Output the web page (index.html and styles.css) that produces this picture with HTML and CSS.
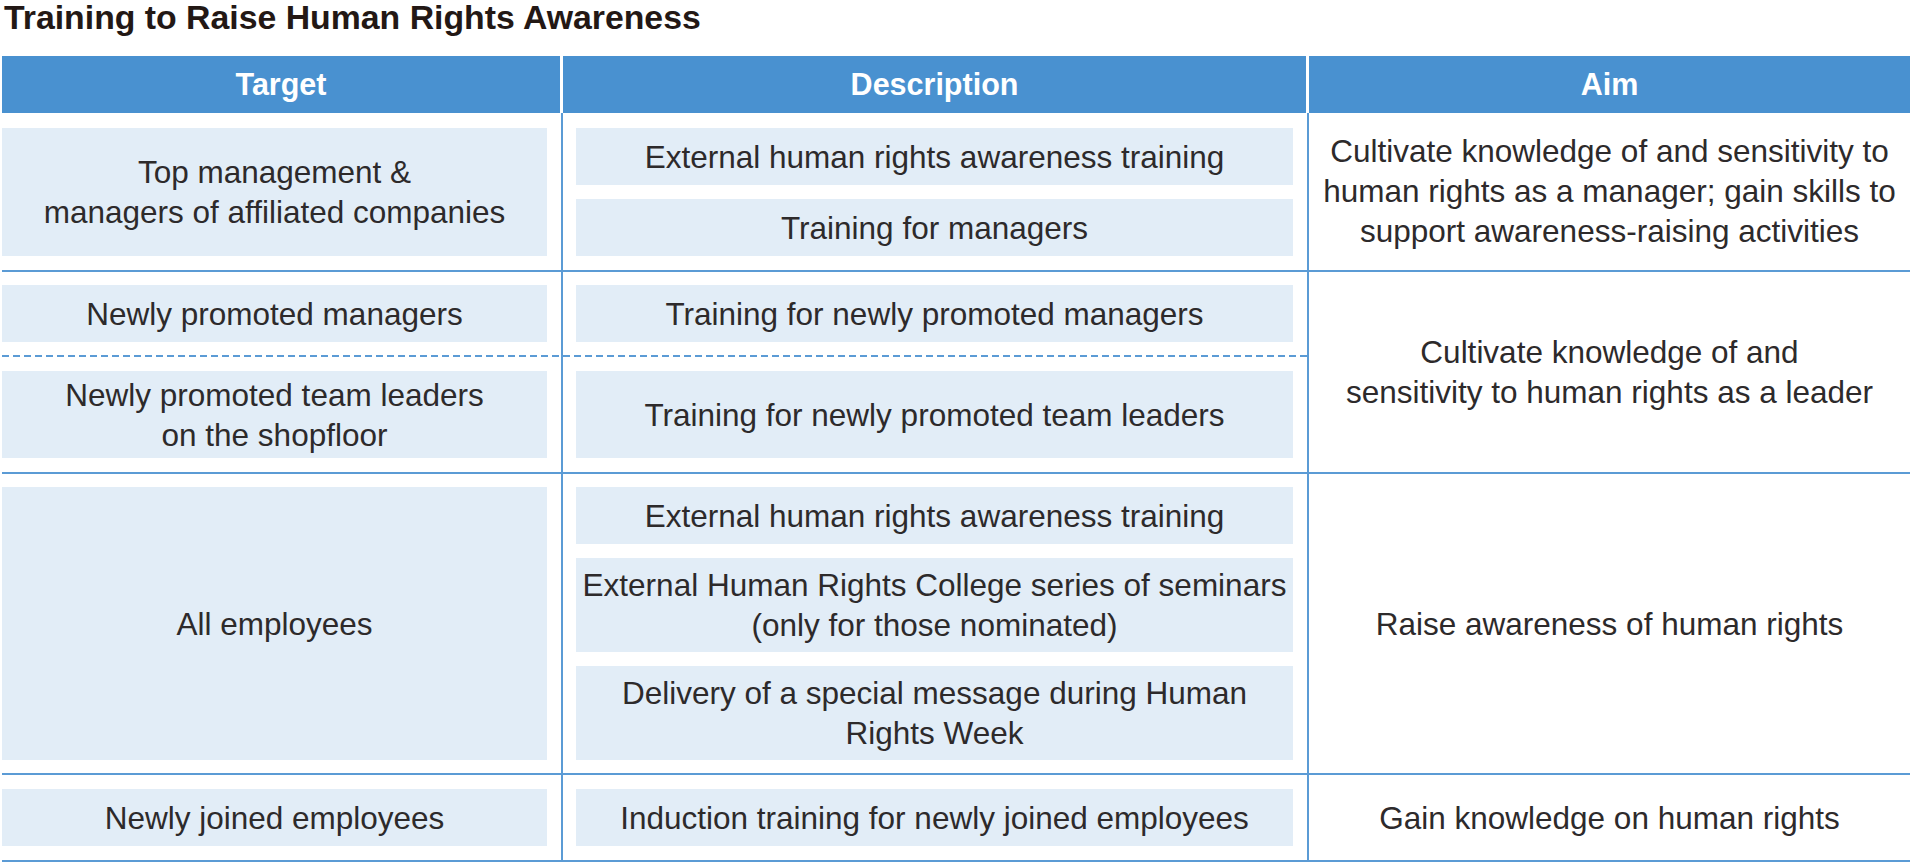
FILE: index.html
```html
<!DOCTYPE html>
<html lang="en">
<head>
<meta charset="utf-8">
<title>Training to Raise Human Rights Awareness</title>
<link rel="stylesheet" href="styles.css">
</head>
<body>
<div class="page">
  <h1 class="title">Training to Raise Human Rights Awareness</h1>
  <div class="table">
    <div class="head">
      <div class="hcell">Target</div>
      <div class="hcell">Description</div>
      <div class="hcell">Aim</div>
    </div>

    <div class="grp grp-1">
      <div class="cell c-target"><div class="box">Top management &amp;<br>managers of affiliated companies</div></div>
      <div class="cell c-desc">
        <div class="box">External human rights awareness training</div>
        <div class="box">Training for managers</div>
      </div>
      <div class="cell c-aim">Cultivate knowledge of and sensitivity to<br>human rights as a manager; gain skills to<br>support awareness-raising activities</div>
    </div>

    <div class="grp grp-2">
      <div class="cell c-target dashed top"><div class="box">Newly promoted managers</div></div>
      <div class="cell c-desc dashed top"><div class="box">Training for newly promoted managers</div></div>
      <div class="cell c-aim span2">Cultivate knowledge of and<br>sensitivity to human rights as a leader</div>
      <div class="cell c-target"><div class="box">Newly promoted team leaders<br>on the shopfloor</div></div>
      <div class="cell c-desc"><div class="box">Training for newly promoted team leaders</div></div>
    </div>

    <div class="grp grp-3">
      <div class="cell c-target top"><div class="box">All employees</div></div>
      <div class="cell c-desc top">
        <div class="box">External human rights awareness training</div>
        <div class="box tall">External Human Rights College series of seminars<br>(only for those nominated)</div>
        <div class="box tall">Delivery of a special message during Human<br>Rights Week</div>
      </div>
      <div class="cell c-aim">Raise awareness of human rights</div>
    </div>

    <div class="grp grp-4">
      <div class="cell c-target"><div class="box">Newly joined employees</div></div>
      <div class="cell c-desc"><div class="box">Induction training for newly joined employees</div></div>
      <div class="cell c-aim">Gain knowledge on human rights</div>
    </div>
  </div>
</div>
</body>
</html>
```

FILE: styles.css
```css
html, body {
  margin: 0;
  padding: 0;
  background: #ffffff;
}

.page {
  width: 1912px;
  font-family: "Liberation Sans", Arial, sans-serif;
  color: #2d2a2b;
}

.title {
  margin: 0 0 22px 4px;
  font-size: 33.8px;
  line-height: 34px;
  font-weight: 700;
  color: #231815;
}

.table {
  margin-left: 2px;
  width: 1908px;
}

.head {
  display: grid;
  grid-template-columns: 558px 743px 601px;
  column-gap: 3px;
  height: 57px;
}

.hcell {
  background: #4991d0;
  color: #ffffff;
  font-size: 30.5px;
  font-weight: 700;
  line-height: 57px;
  text-align: center;
}

.grp {
  display: grid;
  grid-template-columns: 559px 746px 603px;
  border-bottom: 2px solid #5b9bd5;
}

.grp-2 {
  grid-template-rows: auto auto;
}

.cell {
  box-sizing: border-box;
  display: flex;
  flex-direction: column;
  gap: 14px;
  padding-top: 14px;
  padding-bottom: 14px;
}

.grp-1 .cell {
  padding-top: 15px;
}

.top {
  padding-top: 13px;
  padding-bottom: 13px;
}

.c-target {
  padding-right: 14px;
}

.c-desc {
  border-left: 2px solid #5b9bd5;
  padding-left: 13px;
  padding-right: 14px;
}

.c-aim {
  border-left: 2px solid #5b9bd5;
  padding: 0 8px;
  align-items: center;
  justify-content: center;
  text-align: center;
  font-size: 31.5px;
  line-height: 40px;
  white-space: nowrap;
}

.grp-1 .c-aim {
  padding-top: 0;
  padding-bottom: 2px;
}

.span2 {
  grid-column: 3;
  grid-row: 1 / span 2;
}

.dashed {
  padding-bottom: 15px;
  background-image: repeating-linear-gradient(to right, #5b9bd5 0 7px, transparent 7px 11px);
  background-size: 100% 2px;
  background-position: left bottom;
  background-repeat: no-repeat;
}

.box {
  flex: 1;
  box-sizing: border-box;
  min-height: 57px;
  padding: 3.5px 0;
  background: #e2edf7;
  display: flex;
  align-items: center;
  justify-content: center;
  text-align: center;
  font-size: 31.5px;
  line-height: 40px;
  white-space: nowrap;
}

.c-desc .box {
  flex: 0 0 auto;
}

.grp-2 .c-desc .box,
.grp-4 .c-desc .box {
  flex: 1;
}

.box.tall {
  min-height: 94px;
}
```
